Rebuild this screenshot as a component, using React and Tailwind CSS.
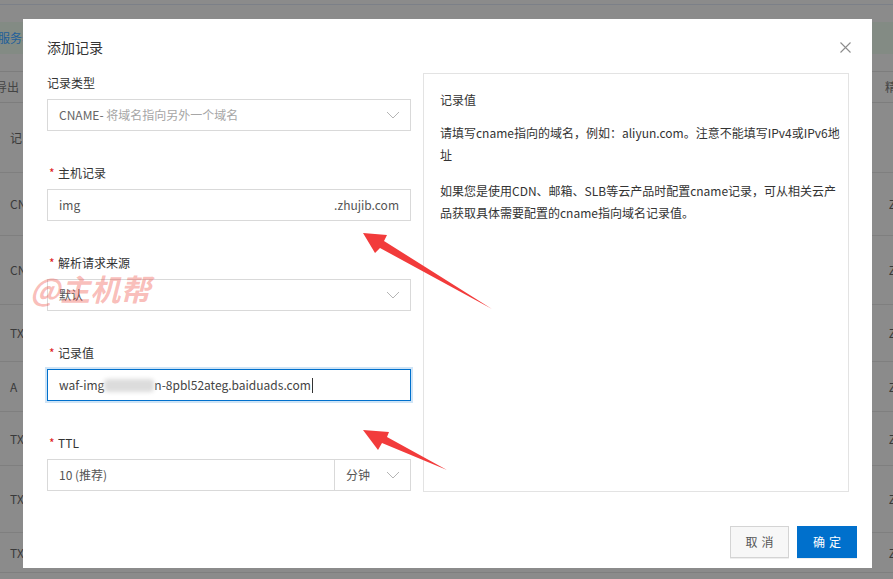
import React from 'react';

const font = { fontFamily: '"Noto Sans CJK SC", "Noto Sans", sans-serif' };

const Chevron = ({ className = '' }) => (
    <svg width="14" height="8" viewBox="0 0 14 8" className={className}>
        <path d="M1 1 L7 7 L13 1" fill="none" stroke="#b5b5b5" strokeWidth="1" />
    </svg>
);

const Label = ({ children, required }) => (
    <div className="h-[19px] leading-[19px] text-[12px] text-[#333] mb-[7px] flex items-center">
        {required && <span className="text-[#e02020] w-[11px] pl-[2px] text-[12px]">*</span>}
        {children}
    </div>
);

// table rows behind the overlay
const rows = [
    { l: '记', r: '', h: 'h-[70px]' },
    { l: 'CN', r: 'Z', h: 'h-[63px]' },
    { l: 'CN', r: 'Z', h: 'h-[69px]' },
    { l: 'TX', r: 'Z', h: 'h-[57px]' },
    { l: 'A', r: 'Z', h: 'h-[50px]' },
    { l: 'TX', r: 'Z', h: 'h-[54px]' },
    { l: 'TX', r: 'Z', h: 'h-[67px]' },
    { l: 'TX', r: 'Z', h: 'h-[40px]' },
];

export default function App() {
    return (
        <div className="relative w-[893px] h-[579px] overflow-hidden bg-[#8b8b8b]" style={font}>
            {/* page behind the mask */}
            <div className="flex flex-col text-[12px] text-[#444]">
                <div className="h-[5px] border-b border-[#7c8088]" />
                <div className="h-[17px]" />
                <div className="h-[32px] bg-[#838b84] flex items-center justify-between">
                    <span className="text-[#1f5f9a] -ml-[2px]">服务器</span>
                </div>
                <div className="h-[18px] border-b border-[#7d7d7d]" />
                <div className="h-[31px] border-b border-[#7d7d7d] flex items-center justify-between">
                    <span className="-ml-[5px] text-[#444]">导出</span>
                    <span className="mr-[-4px] text-[#444]">精</span>
                </div>
                {rows.map((r, i) => (
                    <div key={i} className={`${r.h} shrink-0 border-b border-[#7f7f7f] flex items-center justify-between pl-[10px]`}>
                        <span className="text-[#3a3a3a]">{r.l}</span>
                        <span className="text-[#3a3a3a] mr-[-3px]">{r.r}</span>
                    </div>
                ))}
            </div>

            {/* modal */}
            <div className="absolute left-[23px] top-[19px] w-[849px] h-[549px] bg-white flex flex-col">
                <div className="h-[54px] pl-6 pr-[21px] pt-[18px] flex justify-between items-start">
                    <span className="text-[14px] leading-5 text-[#333]">添加记录</span>
                    <svg width="11" height="11" viewBox="0 0 11 11" className="mt-[5px]">
                        <path d="M0.5 0.5 L10.5 10.5 M10.5 0.5 L0.5 10.5" stroke="#8c8c8c" strokeWidth="1.1" />
                    </svg>
                </div>

                <div className="flex gap-3 pl-6 pr-[23px]">
                    <div className="w-[364px] flex flex-col gap-8 pt-0">
                        <div>
                            <Label>记录类型</Label>
                            <div className="h-8 border border-[#d9d9d9] flex items-center justify-between pl-[11px] pr-[10px] text-[12px]">
                                <span>
                                    <span className="text-[#666]">CNAME-</span>
                                    <span className="text-[#a6a6a6]"> 将域名指向另外一个域名</span>
                                </span>
                                <Chevron />
                            </div>
                        </div>

                        <div>
                            <Label required>主机记录</Label>
                            <div className="h-8 border border-[#d9d9d9] flex items-center justify-between pl-[11px] pr-[11px] text-[12px] text-[#555]">
                                <span>img</span>
                                <span>.zhujib.com</span>
                            </div>
                        </div>

                        <div>
                            <Label required>解析请求来源</Label>
                            <div className="h-8 border border-[#d9d9d9] flex items-center justify-between pl-[11px] pr-[10px] text-[12px] text-[#555]">
                                <span>默认</span>
                                <Chevron />
                            </div>
                        </div>

                        <div>
                            <Label required>记录值</Label>
                            <div className="h-8 border border-[#0070cc] shadow-[0_0_0_2px_#cfe4f6] flex items-center pl-[11px] text-[12px] text-[#444]">
                                <span>waf-img</span>
                                <span className="inline-block w-[50px] h-[13px] bg-[#dcdcdc] blur-[2px] rounded-sm" />
                                <span>n-8pbl52ateg.baiduads.com</span>
                                <span className="inline-block w-px h-[15px] bg-[#333] ml-[1px]" />
                            </div>
                        </div>

                        <div>
                            <Label required>TTL</Label>
                            <div className="h-8 border border-[#d9d9d9] flex text-[12px] text-[#555]">
                                <div className="w-[287px] border-r border-[#d9d9d9] flex items-center pl-[11px]">10 (推荐)</div>
                                <div className="flex-1 flex items-center justify-between pl-[11px] pr-[10px]">
                                    <span>分钟</span>
                                    <Chevron />
                                </div>
                            </div>
                        </div>
                    </div>

                    <div className="flex-1 h-[419px] border border-[#e3e3e3] pl-4 pr-1 pt-[15px] text-[12px] text-[#333]">
                        <div className="leading-[22px]">记录值</div>
                        <p className="mt-[11px] leading-[22px] whitespace-nowrap">
                            请填写cname指向的域名，例如：aliyun.com。注意不能填写IPv4或IPv6地<br />址
                        </p>
                        <p className="mt-[14px] leading-[22px] whitespace-nowrap">
                            如果您是使用CDN、邮箱、SLB等云产品时配置cname记录，可从相关云产<br />品获取具体需要配置的cname指向域名记录值。
                        </p>
                    </div>
                </div>

                <div className="flex justify-end gap-2 pr-[15px] mt-[34px]">
                    <button className="w-[59px] h-8 border border-[#d4d4d4] bg-[#f7f7f7] text-[12px] text-[#555] tracking-[4px] pl-[4px] shadow-[0_1px_0_#eee]">取消</button>
                    <button className="w-[60px] h-8 bg-[#0070cc] text-[12px] text-white tracking-[4px] pl-[4px] shadow-[0_1px_0_#eee]">确定</button>
                </div>
            </div>

            {/* annotations */}
            <svg className="absolute left-0 top-0 pointer-events-none" width="893" height="579">
                <polygon points="363,233 387,235 384,241 492,309 380,248 375,253" fill="#f23b3b" />
                <polygon points="363,430 389,432 387,437 447,470 382,443 378,450" fill="#f23b3b" />
            </svg>
            <div className="absolute left-[30px] top-[272px] text-[30px] leading-[32px] font-bold italic text-[rgba(238,70,60,0.36)] pointer-events-none">
                @主机帮
            </div>
        </div>
    );
}
